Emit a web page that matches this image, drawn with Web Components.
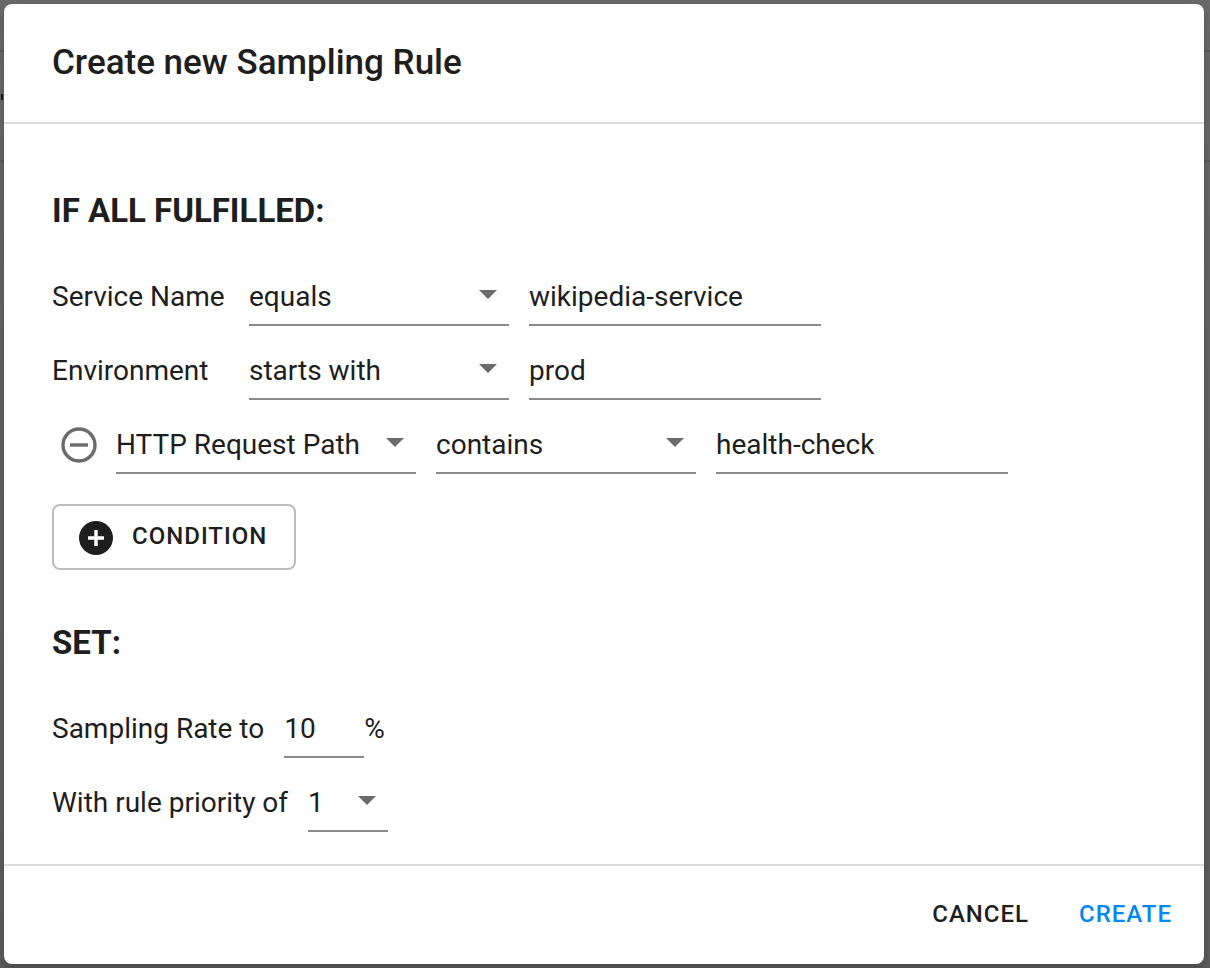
<!DOCTYPE html>
<html lang="en">
<head>
<meta charset="utf-8">
<title>Create new Sampling Rule</title>
<style>
  html, body { margin: 0; min-height: 100%; }
  body { font-family: Roboto, "Liberation Sans", sans-serif; font-size: 28px; line-height: 36px; color: #1e1e1e; background: #606060; }
</style>
</head>
<body>
<sampling-page>
  <rule-dialog>
    <span slot="title">Create new Sampling Rule</span>
    <rule-section heading="If all fulfilled:">
      <rule-row>
        <rule-select label="Service Name" column value="equals" options="equals,starts with,ends with,contains"></rule-select>
        <rule-input name="Service name value" value="wikipedia-service"></rule-input>
      </rule-row>
      <rule-row>
        <rule-select label="Environment" column value="starts with" options="equals,starts with,ends with,contains"></rule-select>
        <rule-input name="Environment value" value="prod"></rule-input>
      </rule-row>
      <rule-row>
        <rule-select removable wide name="Attribute" value="HTTP Request Path" options="HTTP Request Path,HTTP Request Method"></rule-select>
        <rule-select name="Operator" value="contains" options="equals,starts with,ends with,contains"></rule-select>
        <rule-input name="Attribute value" value="health-check"></rule-input>
      </rule-row>
      <rule-button outlined>Condition</rule-button>
    </rule-section>
    <rule-section heading="Set:">
      <rule-row><rule-input short label="Sampling Rate to" value="10">%</rule-input></rule-row>
      <rule-row><rule-select short label="With rule priority of" value="1" options="1,2,3,4,5"></rule-select></rule-row>
    </rule-section>
    <rule-button slot="actions">Cancel</rule-button>
    <rule-button slot="actions" primary>Create</rule-button>
  </rule-dialog>
</sampling-page>
<script>
const define = (name, render) => customElements.define(name, class extends HTMLElement {
  connectedCallback() {
    if (!this.shadowRoot) this.attachShadow({ mode: 'open' }).innerHTML = render(this);
  }
});

define('sampling-page', () => `
  <style>
    :host { display: grid; min-height: 100vh; }
    .backdrop, .front { grid-area: 1 / 1; min-width: 0; }
    .backdrop { display: grid; grid-template-rows: 50px 110px 1fr; background: linear-gradient(#696969, #626262 30%, #5b5b5b); }
    .backdrop div + div { border-top: 2px solid #575757; }
    .backdrop i { display: block; width: 2px; height: 6px; margin: 42px 0 0 1px; background: #1a1a1a; }
    .front { display: grid; padding: 4px 6px 4px 4px; }
  </style>
  <div class="backdrop" aria-hidden="true"><div></div><div><i></i></div><div></div></div>
  <div class="front"><slot></slot></div>`);

define('rule-dialog', () => `
  <style>
    :host { display: grid; min-width: 0; }
    section { display: flex; flex-direction: column; background: #fff; border-radius: 8px; box-shadow: 0 4px 8px rgba(0,0,0,.2); }
    header { padding: 36px 48px; border-bottom: 2px solid #dcdcdc; }
    h1 { margin: 0; font-size: 35px; line-height: 46px; font-weight: 500; }
    .content { flex: 1; padding: 64px 48px 32px; }
    footer { display: flex; justify-content: flex-end; gap: 18px; padding: 16px; border-top: 2px solid #dcdcdc; }
  </style>
  <section role="dialog" aria-labelledby="title">
    <header><h1 id="title"><slot name="title"></slot></h1></header>
    <div class="content"><slot></slot></div>
    <footer><slot name="actions"></slot></footer>
  </section>`);

define('rule-section', el => `
  <style>
    :host { display: block; }
    :host(:not(:first-of-type)) { margin-top: 50px; }
    h2 { margin: 0 0 28px; font-size: 33px; line-height: 46px; font-weight: 700; text-transform: uppercase; }
    .rows { display: flex; flex-direction: column; align-items: flex-start; gap: 10px; }
    ::slotted(rule-button) { margin-top: 20px; }
  </style>
  <h2>${el.getAttribute('heading')}</h2>
  <div class="rows"><slot></slot></div>`);

define('rule-row', () => `
  <style>:host { display: flex; align-items: center; gap: 20px; min-height: 64px; }</style>
  <slot></slot>`);

const fieldStyle = `
  :host { display: flex; align-items: center; }
  label { margin-right: 20px; padding-top: 6px; white-space: nowrap; }
  :host([column]) label { width: 197px; margin-right: 0; }
  .unit { padding-top: 6px; }
  .box { display: grid; align-items: center; width: 260px; border-bottom: 2px solid #8a8a8a; }
  input, select { grid-area: 1 / 1; box-sizing: border-box; width: 100%; height: 62px; margin: 0; padding: 7px 0 0; border: 0; outline: 0;
    border-radius: 0; background: none; appearance: none; font: inherit; letter-spacing: inherit; color: inherit; }
  :host([wide]) .box { width: 300px; }
  :host([short]) .box { width: 80px; }`;

define('rule-input', el => {
  const label = el.getAttribute('label');
  return `
  <style>${fieldStyle}
    :host(:not([short])) .box { width: 292px; }
  </style>
  ${label ? `<label for="field">${label}</label>` : ''}
  <div class="box"><input id="field" type="text" value="${el.getAttribute('value')}" ${label ? '' : `aria-label="${el.getAttribute('name')}"`}></div>
  <span class="unit"><slot></slot></span>`;
});

define('rule-select', el => {
  const label = el.getAttribute('label');
  const value = el.getAttribute('value');
  const options = el.getAttribute('options').split(',')
    .map(o => `<option${o === value ? ' selected' : ''}>${o}</option>`).join('');
  return `
  <style>${fieldStyle}
    .arrow { grid-area: 1 / 1; justify-self: end; width: 18px; height: 9px; margin: 2px 12px 0 0; fill: #6b6b6b; pointer-events: none; }
    .remove { display: grid; place-items: center; width: 54px; height: 54px; margin: 6px 10px 0 0; padding: 0; border: 0; background: none; color: #6b6b6b; }
  </style>
  ${el.hasAttribute('removable') ? `<button class="remove" type="button" aria-label="Remove condition">
    <svg width="36" height="36" viewBox="0 0 36 36" fill="none" stroke="currentColor" stroke-width="3.4"><circle cx="18" cy="18" r="16"/><path d="M9 18h18"/></svg></button>` : ''}
  ${label ? `<label for="field">${label}</label>` : ''}
  <div class="box">
    <select id="field" ${label ? '' : `aria-label="${el.getAttribute('name')}"`}>${options}</select>
    <svg class="arrow" viewBox="0 0 18 9"><path d="M0 0h18L9 9z"/></svg>
  </div>`;
});

define('rule-button', el => `
  <style>
    :host { display: block; }
    button { display: flex; align-items: center; box-sizing: border-box; min-height: 66px; margin: 0; padding: 0 16px; border: 0; border-radius: 8px;
      background: none; color: inherit; font: inherit; font-size: 24px; font-weight: 500; letter-spacing: 1px; text-transform: uppercase; }
    span { padding-bottom: 2px; }
    svg { margin-top: 2px; }
    :host([outlined]) button { gap: 19px; padding: 0 27px 0 25px; border: 2px solid #bcbcbc; }
    :host([primary]) button { color: #0288f0; }
  </style>
  <button type="button">${el.hasAttribute('outlined') ? `<svg width="34" height="34" viewBox="0 0 34 34" aria-hidden="true"><circle cx="17" cy="17" r="17" fill="#1e1e1e"/><path d="M17 9v16M9 17h16" stroke="#fff" stroke-width="3.4"/></svg>` : ''}<span><slot></slot></span></button>`);
</script>
</body>
</html>
